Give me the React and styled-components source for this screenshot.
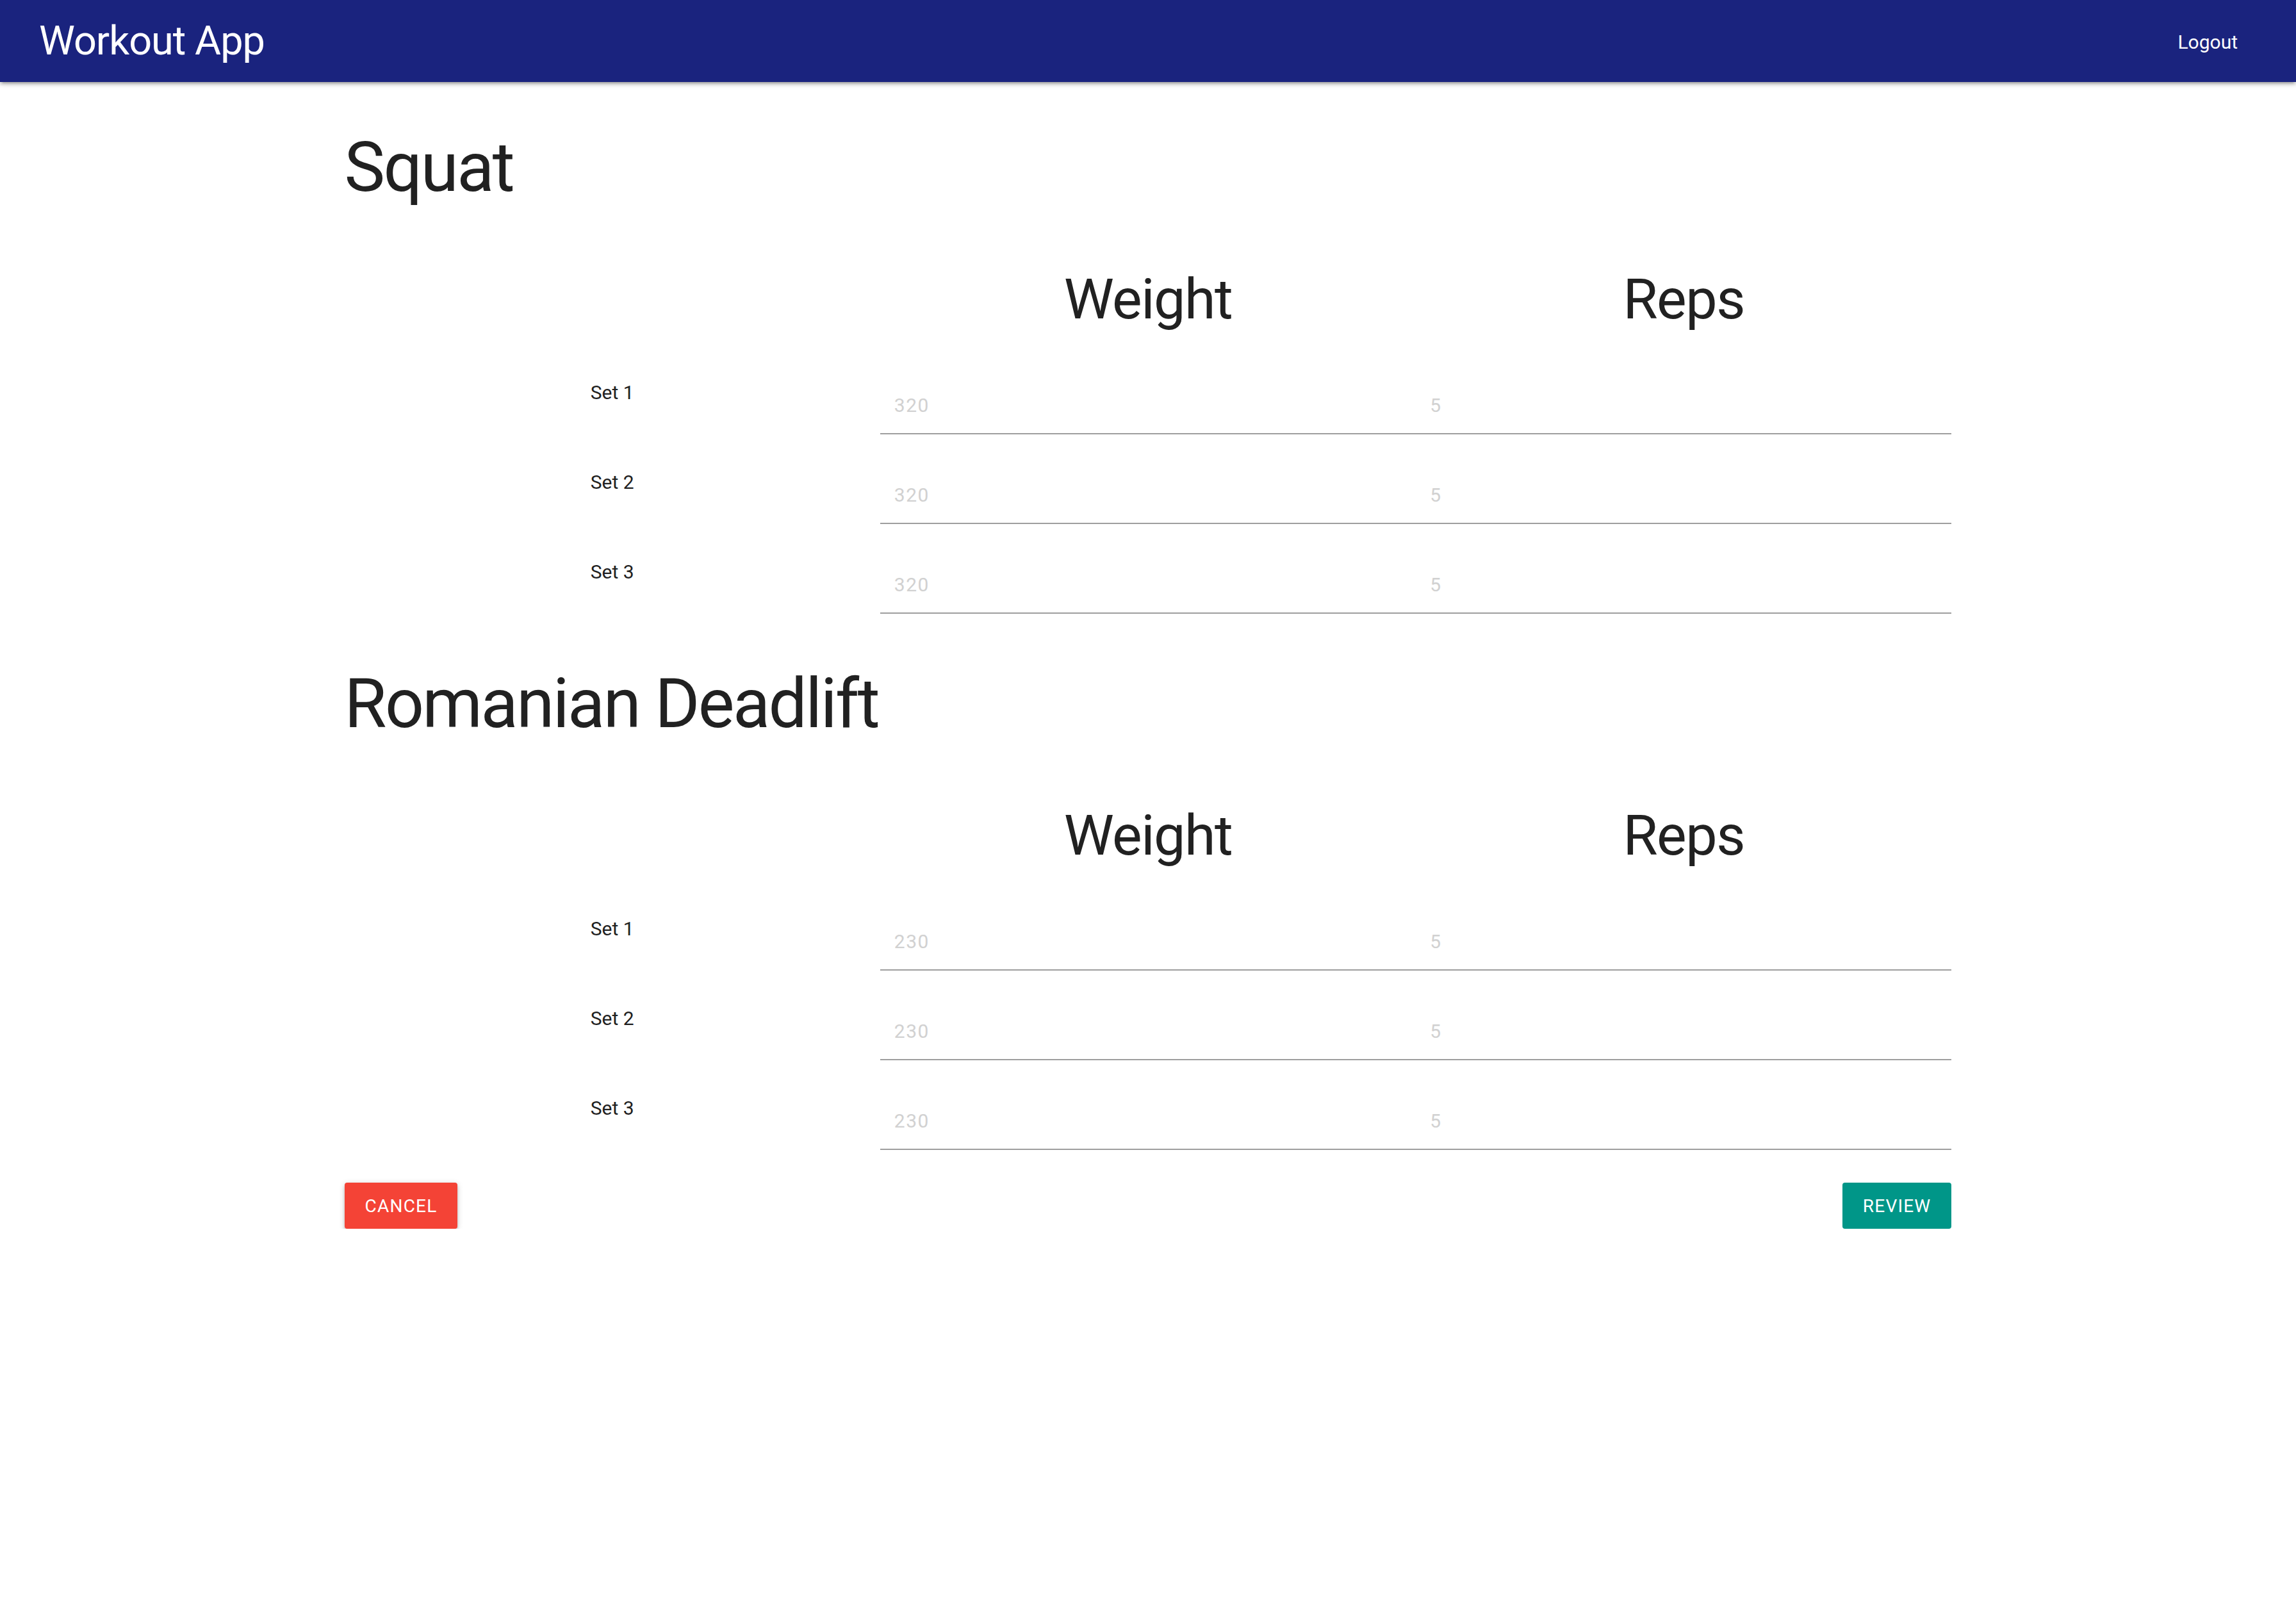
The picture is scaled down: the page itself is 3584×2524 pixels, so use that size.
import React from "react";
import styled, { createGlobalStyle } from "styled-components";

const GlobalStyle = createGlobalStyle`
  html, body {
    margin: 0;
    padding: 0;
    background: #fff;
  }
  body {
    font-family: Roboto, "Liberation Sans", sans-serif;
    color: rgba(0, 0, 0, 0.87);
  }
  * {
    box-sizing: border-box;
  }
`;

const Nav = styled.nav`
  display: flex;
  align-items: center;
  justify-content: space-between;
  height: 128px;
  padding: 0 61px 0 61px;
  background-color: #1a237e;
  color: #fff;
  box-shadow: 0 4px 4px 0 rgba(0, 0, 0, 0.14), 0 6px 2px -4px rgba(0, 0, 0, 0.12),
    0 2px 10px 0 rgba(0, 0, 0, 0.2);
  position: relative;
  z-index: 1;
`;

const Brand = styled.a`
  font-size: 63px;
  line-height: 128px;
  letter-spacing: -1px;
  color: #fff;
  text-decoration: none;
`;

const NavLink = styled.a`
  font-size: 30px;
  line-height: 128px;
  padding: 4px 30px 0;
  color: #fff;
  text-decoration: none;
  cursor: pointer;
`;

const Container = styled.main`
  width: 70%;
  margin: 0 auto;
  padding-top: 43px;
`;

const Exercise = styled.section`
  display: flex;
  flex-direction: column;
`;

const Title = styled.h2`
  margin: 32px 0 0;
  font-size: 107px;
  line-height: 118px;
  font-weight: 400;
  letter-spacing: -2.6px;
  color: #212121;
`;

const Grid = styled.div`
  display: grid;
  grid-template-columns: repeat(3, 1fr);
  align-items: start;
`;

const HeadRow = styled(Grid)`
  margin-top: 97px;
  margin-bottom: 73px;
`;

const ColHead = styled.h3`
  margin: 0;
  font-size: 88px;
  line-height: 97px;
  font-weight: 400;
  letter-spacing: -1.5px;
  text-align: center;
  color: #212121;
`;

const SetRow = styled(Grid)`
  margin-bottom: 50px;
`;

const SetLabel = styled.div`
  padding-top: 2px;
  font-size: 30px;
  line-height: 45px;
  text-align: center;
  color: #212121;
`;

const Field = styled.input`
  display: block;
  width: 100%;
  height: 90px;
  margin: 0;
  padding: 0 0 0 22px;
  border: none;
  border-bottom: 2px solid #9e9e9e;
  border-radius: 0;
  outline: none;
  background: transparent;
  font-family: inherit;
  font-size: 30px;
  letter-spacing: 1.5px;
  color: rgba(0, 0, 0, 0.87);

  &::placeholder {
    color: #d1d1d1;
  }
`;

const Actions = styled.div`
  display: flex;
  justify-content: space-between;
  align-items: center;
  margin-top: 1px;
`;

const Button = styled.button`
  height: 72px;
  padding: 0 32px;
  border: none;
  border-radius: 4px;
  font-family: inherit;
  font-size: 28px;
  letter-spacing: 1.2px;
  text-transform: uppercase;
  color: #fff;
  background-color: ${(p) => (p.$tone === "red" ? "#f44336" : "#009688")};
  box-shadow: ${(p) =>
    p.$raised
      ? "0 4px 4px 0 rgba(0,0,0,0.14), 0 6px 2px -4px rgba(0,0,0,0.12), 0 2px 10px 0 rgba(0,0,0,0.2)"
      : "none"};
  cursor: pointer;
`;

const exercises = [
  { name: "Squat", weight: 320, reps: 5, sets: 3 },
  { name: "Romanian Deadlift", weight: 230, reps: 5, sets: 3 },
];

const App = () => {
  return (
    <>
      <GlobalStyle />
      <Nav>
        <Brand>Workout App</Brand>
        <NavLink>Logout</NavLink>
      </Nav>
      <Container>
        {exercises.map((ex) => (
          <Exercise key={ex.name}>
            <Title>{ex.name}</Title>
            <HeadRow>
              <div />
              <ColHead>Weight</ColHead>
              <ColHead>Reps</ColHead>
            </HeadRow>
            {Array.from({ length: ex.sets }, (_, i) => (
              <SetRow key={i}>
                <SetLabel>Set {i + 1}</SetLabel>
                <Field type="number" placeholder={String(ex.weight)} />
                <Field type="number" placeholder={String(ex.reps)} />
              </SetRow>
            ))}
          </Exercise>
        ))}
        <Actions>
          <Button $tone="red" $raised>
            Cancel
          </Button>
          <Button $tone="teal">Review</Button>
        </Actions>
      </Container>
    </>
  );
};

export default App;
